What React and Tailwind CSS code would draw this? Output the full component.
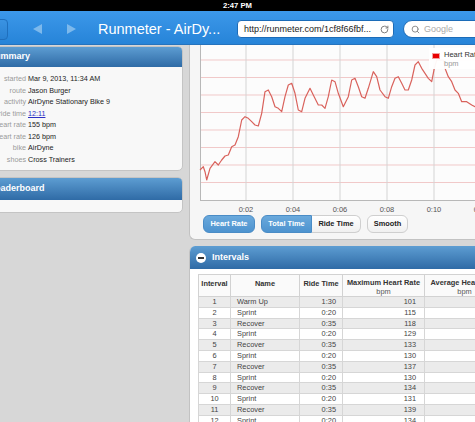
import React from "react";
import { RotateCw, Search } from "lucide-react";

const summary = [
  ["started", "Mar 9, 2013, 11:34 AM"],
  ["route", "Jason Burger"],
  ["activity", "AirDyne Stationary Bike 9"],
  ["ride time", "12:11", true],
  ["max heart rate", "155 bpm"],
  ["avg heart rate", "126 bpm"],
  ["bike", "AirDyne"],
  ["shoes", "Cross Trainers"],
];

const intervals = [
  [1, "Warm Up", "1:30", 101],
  [2, "Sprint", "0:20", 115],
  [3, "Recover", "0:35", 118],
  [4, "Sprint", "0:20", 129],
  [5, "Recover", "0:35", 133],
  [6, "Sprint", "0:20", 130],
  [7, "Recover", "0:35", 137],
  [8, "Sprint", "0:20", 130],
  [9, "Recover", "0:35", 134],
  [10, "Sprint", "0:20", 131],
  [11, "Recover", "0:35", 139],
  [12, "Sprint", "0:20", 134],
];

// heart rate trace, traced at 3x from the screenshot
const trace = [
  [45, 390], [55, 380], [60, 395], [65, 420], [75, 385], [90, 365], [100, 375], [110, 360],
  [120, 348], [130, 345], [140, 320], [150, 315], [160, 290], [170, 240], [180, 230],
  [190, 235], [200, 245], [210, 255], [220, 258], [230, 220], [240, 155], [250, 150],
  [260, 170], [270, 200], [280, 205], [290, 215], [300, 170], [310, 135], [320, 130],
  [330, 160], [340, 210], [350, 215], [360, 175], [375, 145], [385, 165], [400, 195],
  [410, 195], [420, 205], [430, 170], [440, 120], [450, 125], [460, 160], [475, 200],
  [490, 170], [500, 120], [510, 115], [520, 140], [530, 170], [540, 175], [550, 145],
  [565, 95], [575, 110], [585, 150], [600, 170], [610, 175], [620, 140], [630, 115],
  [640, 110], [650, 130], [660, 150], [670, 150], [680, 120], [690, 75], [700, 65],
  [710, 85], [720, 100], [730, 115], [740, 125], [748, 85], [755, 60], [775, 60],
  [780, 85], [790, 110], [800, 125], [810, 150], [820, 160], [830, 185], [845, 185],
  [860, 195], [870, 200], [890, 205],
];

const tracePath = trace
  .map(([x, y], i) => `${i ? "L" : "M"}${(x / 3 - 5).toFixed(1)} ${(y / 3 - 5).toFixed(1)}`)
  .join(" ");

const hGrid = [15, 32.5, 50, 67.5, 85, 102.5, 120, 137.5];
const ticks = [
  [56, "0:02"],
  [103, "0:04"],
  [150, "0:06"],
  [197, "0:08"],
  [244, "0:10"],
  [291, "0:12"],
];

function PanelHeader({ children, className = "" }) {
  return (
    <div
      className={`bg-linear-to-b from-[#5d9dd2] to-[#2f6ba6] text-white font-bold text-[9px] flex items-center ${className}`}
    >
      {children}
    </div>
  );
}

function App() {
  return (
    <div className="w-[475px] h-[422px] overflow-hidden bg-[#d7d7d7] font-['Liberation_Sans',Arial,sans-serif]">
      {/* status bar */}
      <div className="h-[11px] bg-black flex items-center justify-center text-white font-bold text-[7.7px] leading-none">
        2:47 PM
      </div>

      {/* safari toolbar */}
      <div className="h-[34px] bg-linear-to-b from-[#3c98ea] to-[#2684d8] flex items-center pt-[3px] border-b border-[#2573bd]">
        <div className="w-[20px] h-[21px] -ml-[12px] shrink-0 rounded-[4px] border border-[#1f6fbd] bg-linear-to-b from-[#3a93e2] to-[#2a82d3]" />
        <svg width="9" height="10" viewBox="0 0 9 10" className="ml-[25px] shrink-0">
          <polygon points="9,0 9,10 0,5" fill="#7db9ec" />
        </svg>
        <svg width="9" height="10" viewBox="0 0 9 10" className="ml-[25px] shrink-0">
          <polygon points="0,0 0,10 9,5" fill="#7db9ec" />
        </svg>
        <div className="ml-[22px] w-[139px] shrink-0 text-white text-[14.5px] leading-none whitespace-nowrap">
          Runmeter - AirDy...
        </div>
        <div className="w-[157px] h-[18px] shrink-0 rounded-[4px] bg-white border border-[#1c6cb8] flex items-center pl-[6px] pr-[4px]">
          <span className="flex-1 text-[9px] text-[#222] whitespace-nowrap leading-none">
            http://runmeter.com/1cf8f66fbf...
          </span>
          <RotateCw size={9} strokeWidth={2.5} className="text-[#777]" />
        </div>
        <div className="ml-[9px] w-[90px] h-[18px] shrink-0 rounded-full bg-white border border-[#1c6cb8] flex items-center pl-[7px] gap-[4px]">
          <Search size={9} strokeWidth={2.5} className="text-[#888]" />
          <span className="text-[9px] text-[#aaa] leading-none">Google</span>
        </div>
      </div>

      {/* page */}
      <div className="flex -ml-[20px]">
        {/* left column */}
        <div className="w-[203px] shrink-0 pt-[1px]">
          <div className="rounded-[5px] overflow-hidden border border-[#c4c4c4] bg-[#f8f8f8]">
            <PanelHeader className="h-[20px] pl-[8px]">Summary</PanelHeader>
            <div className="pt-[6px] pb-[5px] text-[7.2px] leading-[11.5px]">
              {summary.map(([label, value, link]) => (
                <div key={label} className="flex">
                  <div className="w-[45px] shrink-0 flex justify-end">
                    <span className="shrink-0 whitespace-nowrap text-[#9a9a9a]">{label}</span>
                  </div>
                  <span
                    className={`ml-[2px] whitespace-nowrap ${
                      link ? "text-[#2b2fc4] underline" : "text-[#222]"
                    }`}
                  >
                    {value}
                  </span>
                </div>
              ))}
            </div>
          </div>

          <div className="mt-[6px] rounded-[5px] overflow-hidden border border-[#c4c4c4] bg-[#f8f8f8]">
            <PanelHeader className="h-[22px] pl-[9px]">Leaderboard</PanelHeader>
            <div className="h-[12px]" />
          </div>
        </div>

        {/* right column */}
        <div className="ml-[6px] w-[300px] shrink-0">
          <div className="relative h-[195px] rounded-b-[6px] bg-[#f6f6f6] border-l border-b border-[#c2c2c2]">
            <svg width="300" height="168" viewBox="0 0 300 168" className="block">
              <rect x="10" y="0" width="300" height="155" fill="#fcfcfc" />
              {hGrid.map((y) => (
                <line key={y} x1="10" x2="300" y1={y} y2={y} stroke="#f1c9c9" strokeWidth="1" />
              ))}
              {ticks.map(([x]) => (
                <line key={x} x1={x} x2={x} y1="0" y2="155" stroke="#d4d4d4" strokeWidth="1" />
              ))}
              <line x1="10.5" x2="10.5" y1="0" y2="155" stroke="#b8b8b8" />
              <line x1="10" x2="300" y1="155.5" y2="155.5" stroke="#b8b8b8" />
              <path d={tracePath} fill="none" stroke="#d9625c" strokeWidth="1.2" strokeLinejoin="round" />
              {ticks.map(([x, t]) => (
                <text
                  key={t}
                  x={x}
                  y="167"
                  textAnchor="middle"
                  fontSize="7.5"
                  fill="#555"
                  fontFamily="Liberation Sans, Arial, sans-serif"
                >
                  {t}
                </text>
              ))}
            </svg>

            <div className="absolute left-[239px] top-[3px] w-[70px] h-[21px] bg-white/95 pl-[3px] pt-[2px] flex gap-[4px]">
              <div className="mt-[3px] w-[8px] h-[6px] bg-[#e80000] border border-[#f4a0a0]" />
              <div className="text-[7.5px] leading-[9px] text-[#333]">
                <div>Heart Rate</div>
                <div className="text-[#999]">bpm</div>
              </div>
            </div>

            <div className="flex items-center gap-[6px] pl-[13px] mt-[2px] text-[7.4px] font-bold">
              <button className="w-[52px] h-[18px] rounded-[6px] bg-linear-to-b from-[#6aa9dc] to-[#4d93cf] text-white border border-[#4a8cc6]">
                Heart Rate
              </button>
              <div className="flex h-[18px]">
                <button className="w-[51px] h-full rounded-l-[6px] bg-linear-to-b from-[#6aa9dc] to-[#4d93cf] text-white border border-[#4a8cc6]">
                  Total Time
                </button>
                <button className="w-[49px] h-full rounded-r-[6px] bg-linear-to-b from-white to-[#f0f0f0] text-[#222] border border-l-0 border-[#cfcfcf]">
                  Ride Time
                </button>
              </div>
              <button className="w-[41px] h-[18px] rounded-[6px] bg-linear-to-b from-white to-[#f0f0f0] text-[#222] border border-[#cfcfcf]">
                Smooth
              </button>
            </div>
          </div>

          <div className="mt-[6px] rounded-t-[6px] overflow-hidden border-l border-[#c2c2c2] bg-white">
            <PanelHeader className="h-[23px] pl-[6px] gap-[6px]">
              <div className="w-[10px] h-[10px] rounded-full bg-white flex items-center justify-center">
                <div className="w-[6px] h-[2px] bg-[#333]" />
              </div>
              <span>Intervals</span>
            </PanelHeader>
            <div className="pl-[8px] pt-[5px] h-[160px]">
              <table className="border-collapse table-fixed text-[7.4px] text-[#444] w-[306px]">
                <colgroup>
                  <col className="w-[32px]" />
                  <col className="w-[69px]" />
                  <col className="w-[43px]" />
                  <col className="w-[82px]" />
                  <col className="w-[80px]" />
                </colgroup>
                <thead>
                  <tr className="h-[21px] bg-[#fafafa] text-[#333]">
                    <th className="border border-[#d2d2d2] align-top pt-[3px] font-bold">Interval</th>
                    <th className="border border-[#d2d2d2] align-top pt-[3px] font-bold">Name</th>
                    <th className="border border-[#d2d2d2] align-top pt-[3px] font-bold whitespace-nowrap">Ride Time</th>
                    <th className="border border-[#d2d2d2] align-top pt-[3px] font-bold leading-[9px] whitespace-nowrap">
                      Maximum Heart Rate
                      <div className="font-normal text-[#555]">bpm</div>
                    </th>
                    <th className="border border-[#d2d2d2] align-top pt-[3px] font-bold leading-[9px] whitespace-nowrap">
                      Average Heart Rate
                      <div className="font-normal text-[#555]">bpm</div>
                    </th>
                  </tr>
                </thead>
                <tbody>
                  {intervals.map(([n, name, time, max]) => (
                    <tr key={n} className={`h-[10.8px] leading-[9.6px] ${n % 2 ? "bg-[#ebebeb]" : "bg-white"}`}>
                      <td className="border border-[#d6d6d6] text-center">{n}</td>
                      <td className="border border-[#d6d6d6] pl-[6px]">{name}</td>
                      <td className="border border-[#d6d6d6] text-right pr-[6px]">{time}</td>
                      <td className="border border-[#d6d6d6] text-right pr-[8px]">{max}</td>
                      <td className="border border-[#d6d6d6]" />
                    </tr>
                  ))}
                </tbody>
              </table>
            </div>
          </div>
        </div>
      </div>
    </div>
  );
}

export default App;
